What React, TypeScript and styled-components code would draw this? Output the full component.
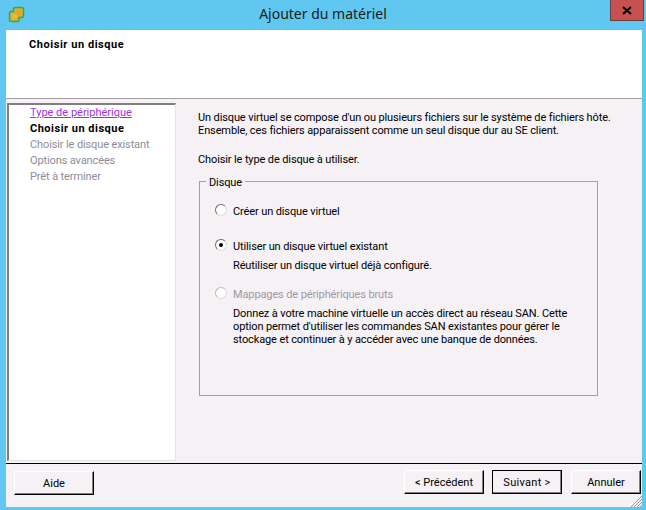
import React from "react";
import styled, { createGlobalStyle } from "styled-components";

const Global = createGlobalStyle`
  html, body { margin: 0; padding: 0; background: #60c8f0; }
  body { font-family: Roboto, "Noto Sans", sans-serif; font-size: 11px; letter-spacing: -0.12px; color: #000; }
  p { margin: 0; }
`;

const Win = styled.div`
  width: 646px; height: 510px; background: #60c8f0; display: flex; flex-direction: column; overflow: hidden;
`;
const TitleBar = styled.div`
  height: 30px; flex: none; display: flex; align-items: flex-start; position: relative; padding-left: 8px;
`;
const Logo = styled.svg` width: 17px; height: 17px; margin-top: 6px; flex: none; `;
const Title = styled.div`
  position: absolute; left: 0; right: 0; top: 4px; text-align: center; font-family: "Noto Sans", sans-serif; font-size: 14px; letter-spacing: 0; line-height: 20px; color: #1a1a1a;
`;
const Close = styled.div`
  position: absolute; top: 0; right: 2px; width: 34px; height: 21px; box-sizing: border-box;
  background: #c75050; border: 1px solid #6f3a3a; border-top: none;
  display: flex; align-items: center; justify-content: center;
`;
const Client = styled.div`
  flex: 1; margin: 0 4px 3px 6px; background: #f5f1f5; display: flex; flex-direction: column; min-height: 0; position: relative;
`;
const Header = styled.div`
  height: 69px; box-sizing: border-box; background: #fff; border-bottom: 1px solid #a0a0a0; padding: 7px 0 0 23px; flex: none;
  font-weight: 700; line-height: 15px; letter-spacing: 0.55px;
`;
const Main = styled.div`
  flex: 1; display: flex; min-height: 0; padding: 4px 0 0 1px;
`;
const Side = styled.div`
  width: 169px; height: 358px; box-sizing: border-box; background: #fff; flex: none;
  border-style: solid; border-color: #808080 #e3e3e3 #e3e3e3 #808080; border-width: 2px 1px 1px 2px;
  padding: 1px 0 0 21px; display: flex; flex-direction: column;
`;
const Step = styled.div<{ $kind: "link" | "current" | "off" }>`
  height: 16px; line-height: 14px; white-space: nowrap; flex: none;
  color: ${p => p.$kind === "link" ? "#9932e6" : p.$kind === "off" ? "#8d8d99" : "#000"};
  text-decoration: ${p => p.$kind === "link" ? "underline" : "none"};
  font-weight: ${p => p.$kind === "current" ? 700 : 400};
  letter-spacing: ${p => p.$kind === "current" ? "0.5px" : p.$kind === "link" ? "0" : "-0.12px"};
`;
const Pane = styled.div`
  flex: 1; padding: 4px 0 0 22px; line-height: 13px;
`;
const Intro = styled.p` line-height: 13px; margin-top: 4px; `;
const Choose = styled.p` margin-top: 16px; `;
const Group = styled.div`
  width: 399px; height: 215px; box-sizing: border-box; margin: 15px 0 0 1px; padding: 0 10px 0 15px;
  border: 1px solid #a0a0a0; position: relative;
`;
const Legend = styled.div`
  position: absolute; top: -6px; left: 6px; background: #f5f1f5; padding: 0 3px; line-height: 13px;
`;
const Option = styled.div<{ $gap: number }>`
  display: flex; margin-top: ${p => p.$gap}px; gap: 6px;
`;
const Radio = styled.span<{ $on?: boolean; $off?: boolean }>`
  width: 12px; height: 12px; box-sizing: border-box; border-radius: 50%; flex: none; background: #fff;
  margin-top: -1px;
  border: 1px solid ${p => p.$off ? "#b9b9b9" : "#6f6f6f"}; border-right-color: #dcdcdc; border-bottom-color: #dcdcdc;
  display: flex; align-items: center; justify-content: center;
  &::after { content: ""; width: 4px; height: 4px; border-radius: 50%; background: ${p => p.$on ? "#000" : "transparent"}; }
`;
const OptText = styled.div<{ $off?: boolean }>`
  line-height: 13px; color: ${p => p.$off ? "#9a9aa6" : "#000"};
`;
const OptDesc = styled.p<{ $top: number }>`
  margin: ${p => p.$top}px 0 0 18px; line-height: 13px; width: 356px;
`;
const Footer = styled.div`
  flex: none; height: 44px; border-top: 1px solid #000; margin-top: 3px; display: flex; align-items: flex-start;
  padding: 6px 1px 0 8px; box-sizing: border-box; position: relative;
`;
const Btn = styled.div<{ $w: number; $def?: boolean; $ml?: number; $low?: boolean }>`
  width: ${p => p.$w}px; height: 24px; box-sizing: border-box; margin-left: ${p => p.$ml ?? 0}px; flex: none;
  margin-top: ${p => p.$low ? 1 : 0}px;
  display: flex; align-items: center; justify-content: center; background: #f5f1f5;
  border: 1px solid; border-color: ${p => p.$def ? "#000" : "#fff"} #000 #000 ${p => p.$def ? "#000" : "#fff"};
  box-shadow: inset -1px -1px 0 #808080;
  letter-spacing: ${p => p.$def ? "0.3px" : "0"};
`;
const Grip = styled.svg` position: absolute; right: 0; bottom: 0; width: 12px; height: 12px; `;

export default function App() {
  return (
    <Win>
      <Global />
      <TitleBar>
        <Logo viewBox="0 0 17 17">
          <path d="M7.500 1.500h6a2 2 0 0 1 2 2v6a2 2 0 0 1-2 2H11v2a2 2 0 0 1-2 2H3.500a2 2 0 0 1-2-2v-6a2 2 0 0 1 2-2H5.500v-2a2 2 0 0 1 2-2z" fill="#9cc55a" stroke="#5f9a26" strokeWidth="1.500" />
          <rect x="8" y="4" width="5" height="5" fill="#f0a11a" />
          <rect x="4" y="8" width="5" height="5" fill="#f3b23c" />
        </Logo>
        <Title>Ajouter du matériel</Title>
        <Close>
          <svg width="10" height="9" viewBox="0 0 10 9"><path d="M1 1l8 7M9 1L1 8" stroke="#000" strokeWidth="2" /></svg>
        </Close>
      </TitleBar>
      <Client>
        <Header>Choisir un disque</Header>
        <Main>
          <Side>
            <Step $kind="link">Type de périphérique</Step>
            <Step $kind="current">Choisir un disque</Step>
            <Step $kind="off">Choisir le disque existant</Step>
            <Step $kind="off">Options avancées</Step>
            <Step $kind="off">Prêt à terminer</Step>
          </Side>
          <Pane>
            <Intro>Un disque virtuel se compose d'un ou plusieurs fichiers sur le système de fichiers hôte.<br />Ensemble, ces fichiers apparaissent comme un seul disque dur au SE client.</Intro>
            <Choose>Choisir le type de disque à utiliser.</Choose>
            <Group>
              <Legend>Disque</Legend>
              <Option $gap={23}><Radio /><OptText>Créer un disque virtuel</OptText></Option>
              <Option $gap={22}><Radio $on /><OptText>Utiliser un disque virtuel existant</OptText></Option>
              <OptDesc $top={6}>Réutiliser un disque virtuel déjà configuré.</OptDesc>
              <Option $gap={16}><Radio $off /><OptText $off>Mappages de périphériques bruts</OptText></Option>
              <OptDesc $top={6}>Donnez à votre machine virtuelle un accès direct au réseau SAN. Cette option permet d'utiliser les commandes SAN existantes pour gérer le stockage et continuer à y accéder avec une banque de données.</OptDesc>
            </Group>
          </Pane>
        </Main>
        <Footer>
          <Btn $w={80} $low>Aide</Btn>
          <Btn $w={80} $ml={310}>&lt; Précédent</Btn>
          <Btn $w={70} $ml={8} $def>Suivant &gt;</Btn>
          <Btn $w={70} $ml={9}>Annuler</Btn>
          <Grip viewBox="0 0 12 12"><path d="M12 1L1 12M12 4L4 12M12 7L7 12M12 10L10 12" stroke="#9a9a9a" strokeWidth="1" /></Grip>
        </Footer>
      </Client>
    </Win>
  );
}
